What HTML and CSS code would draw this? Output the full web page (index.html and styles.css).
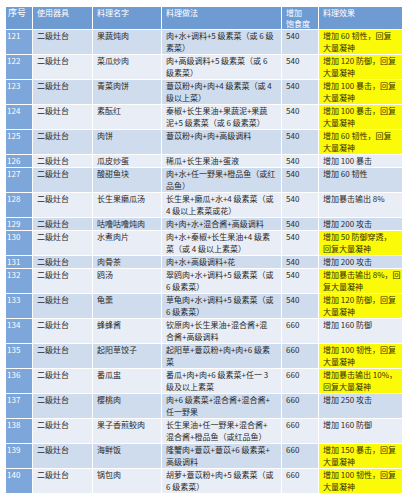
FILE: index.html
```html
<!DOCTYPE html>
<html lang="zh">
<head>
<meta charset="utf-8">
<link rel="stylesheet" href="styles.css">
</head>
<body>
<table class="recipes">
<colgroup>
<col class="c-no"><col class="c-tool"><col class="c-name"><col class="c-method"><col class="c-sat"><col class="c-effect">
</colgroup>
<thead>
<tr><th class="no">序号</th><th>使用器具</th><th>料理名字</th><th>料理做法</th><th>增加<br>饱食度</th><th>料理效果</th></tr>
</thead>
<tbody>
<tr class="odd"><td class="no">121</td><td>二级灶台</td><td>果蔬炖肉</td><td>肉+水+调料+5 级素菜（或 6 级<br>素菜）</td><td>540</td><td class="hl">增加 60 韧性，回复<br>大量凝神</td></tr>
<tr class="even"><td class="no">122</td><td>二级灶台</td><td>菜瓜炒肉</td><td>肉+高级调料+5 级素菜（或 6<br>级素菜）</td><td>540</td><td class="hl">增加 120 防御，回复<br>大量凝神</td></tr>
<tr class="odd"><td class="no">123</td><td>二级灶台</td><td>青菜肉饼</td><td>薏苡粉+肉+肉+4 级素菜（或 4<br>级以上菜）</td><td>540</td><td class="hl">增加 100 暴击，回复<br>大量凝神</td></tr>
<tr class="even"><td class="no">124</td><td>二级灶台</td><td>素酝红</td><td>秦椒+长生果油+果蔬泥+果蔬<br>泥+5 级素菜（或 6 级素菜）</td><td>540</td><td class="hl">增加 100 暴击，回复<br>大量凝神</td></tr>
<tr class="odd"><td class="no">125</td><td>二级灶台</td><td>肉饼</td><td>薏苡粉+肉+肉+高级调料</td><td>540</td><td class="hl">增加 60 韧性，回复<br>大量凝神</td></tr>
<tr class="even"><td class="no">126</td><td>二级灶台</td><td>瓜皮炒蛋</td><td>稀瓜+长生果油+蛋液</td><td>540</td><td>增加 100 暴击</td></tr>
<tr class="odd"><td class="no">127</td><td>二级灶台</td><td>酸甜鱼块</td><td>肉+水+任一野果+橙品鱼（或红<br>品鱼）</td><td>540</td><td>增加 60 韧性</td></tr>
<tr class="even"><td class="no">128</td><td>二级灶台</td><td>长生果癞瓜汤</td><td>长生果+癞瓜+水+4 级素菜（或<br>4 级以上素菜或花）</td><td>540</td><td>增加暴击输出 8%</td></tr>
<tr class="odd"><td class="no">129</td><td>二级灶台</td><td>咕噜咕噜炖肉</td><td>肉+肉+水+混合酱+高级调料</td><td>540</td><td>增加 200 攻击</td></tr>
<tr class="even"><td class="no">130</td><td>二级灶台</td><td>水煮肉片</td><td>肉+水+秦椒+长生果油+4 级素<br>菜（或 4 级以上素菜）</td><td>540</td><td class="hl">增加 50 防御穿透，<br>回复大量凝神</td></tr>
<tr class="odd"><td class="no">131</td><td>二级灶台</td><td>肉骨茶</td><td>肉+水+高级调料+花</td><td>540</td><td>增加 200 攻击</td></tr>
<tr class="even"><td class="no">132</td><td>二级灶台</td><td>鸥汤</td><td>翠鸥肉+水+调料+5 级素菜（或<br>6 级素菜）</td><td>540</td><td class="hl">增加暴击输出 8%，回<br>复大量凝神</td></tr>
<tr class="odd"><td class="no">133</td><td>二级灶台</td><td>龟羹</td><td>草龟肉+水+调料+5 级素菜（或<br>6 级素菜）</td><td>540</td><td class="hl">增加 120 防御，回复<br>大量凝神</td></tr>
<tr class="even"><td class="no">134</td><td>二级灶台</td><td>蜂蜂酱</td><td>钦原肉+长生果油+混合酱+混<br>合酱+高级调料</td><td>660</td><td>增加 160 防御</td></tr>
<tr class="odd"><td class="no">135</td><td>二级灶台</td><td>起阳草饺子</td><td>起阳草+薏苡粉+肉+肉+6 级素<br>菜</td><td>660</td><td class="hl">增加 100 韧性，回复<br>大量凝神</td></tr>
<tr class="even"><td class="no">136</td><td>二级灶台</td><td>番瓜盅</td><td>番瓜+肉+肉+6 级素菜+任一 3<br>级及以上素菜</td><td>660</td><td class="hl">增加暴击输出 10%，<br>回复大量凝神</td></tr>
<tr class="odd"><td class="no">137</td><td>二级灶台</td><td>樱桃肉</td><td>肉+6 级素菜+混合酱+混合酱+<br>任一野果</td><td>660</td><td>增加 250 攻击</td></tr>
<tr class="even"><td class="no">138</td><td>二级灶台</td><td>果子香煎鲛肉</td><td>长生果油+任一野果+混合酱+<br>混合酱+橙品鱼（或红品鱼）</td><td>660</td><td>增加 160 防御</td></tr>
<tr class="odd"><td class="no">139</td><td>二级灶台</td><td>海鲜饭</td><td>隆蟹肉+薏苡+薏苡+6 级素菜+<br>高级调料</td><td>660</td><td class="hl">增加 150 暴击，回复<br>大量凝神</td></tr>
<tr class="even"><td class="no">140</td><td>二级灶台</td><td>锅包肉</td><td>胡萝+薏苡粉+肉+5 级素菜（或<br>6 级素菜）</td><td>660</td><td class="hl">增加 100 韧性，回复<br>大量凝神</td></tr>
</tbody>
</table>
</body>
</html>
```
FILE: styles.css
```css
html, body {
  margin: 0;
  background: #ffffff;
}
body {
  padding: 7px 0 0 5px;
  font-family: "Noto Sans CJK SC", "Noto Sans", sans-serif;
  font-size: 8px;
  color: #2a2a2a;
}
.recipes {
  border-collapse: collapse;
  table-layout: fixed;
  width: 397px;
}
.c-no { width: 27px; }
.c-tool { width: 60px; }
.c-name { width: 69px; }
.c-method { width: 120px; }
.c-sat { width: 37px; }
.c-effect { width: 84px; }
.recipes th,
.recipes td {
  border: 1px solid #ffffff;
  padding: 0 0 0 4px;
  text-align: left;
  vertical-align: top;
  white-space: nowrap;
  overflow: hidden;
}
.recipes th {
  background: #6f9bd3;
  color: #ffffff;
  font-weight: normal;
  line-height: 11px;
  height: 21px;
  padding-top: 0;
  border-top: none;
}
.recipes td {
  line-height: 12px;
}
.recipes th.no {
  padding-left: 2px;
  font-size: 9px;
}
.recipes td.no {
  background: #7da6da;
  color: #ffffff;
  padding-left: 1px;
}
.odd td { background: #cfdcee; }
.even td { background: #e8edf6; }
.recipes td.hl {
  background: #fbfa08;
  color: #333300;
}
```
